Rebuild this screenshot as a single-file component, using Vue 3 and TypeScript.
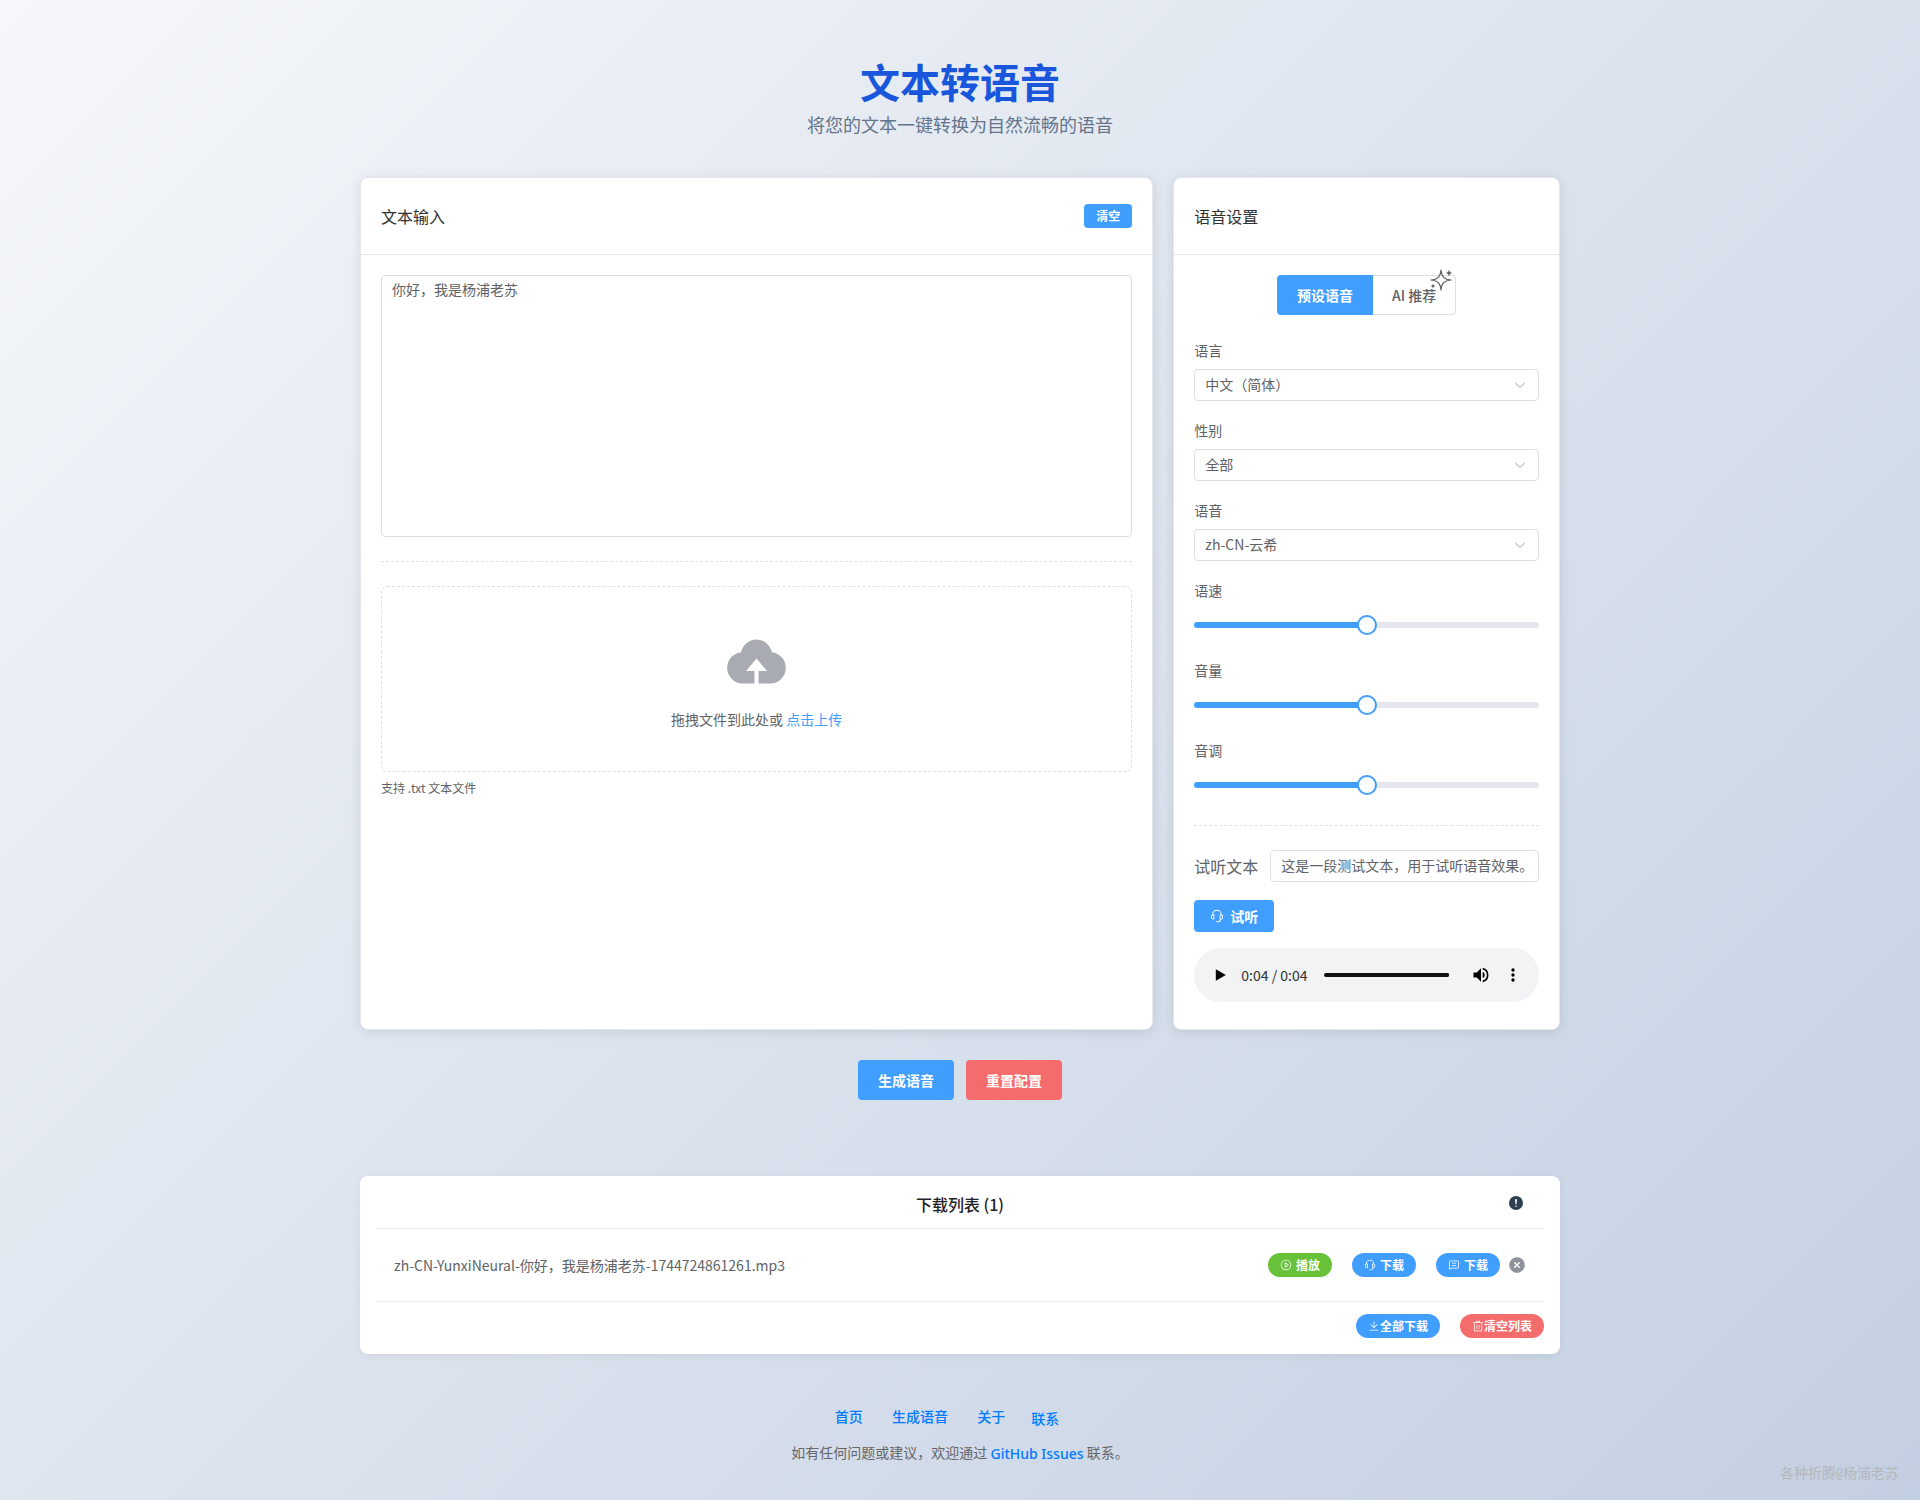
<script setup lang="ts">
import { ref } from 'vue'

type Mode = 'preset' | 'ai'
type SliderKey = 'rate' | 'volume' | 'pitch'

interface SelectField {
  id: string
  label: string
  value: string
  options: string[]
}

interface SliderField {
  id: SliderKey
  label: string
  value: number
}

const icons = {
  arrow:
    'M831.872 340.864 512 652.672 192.128 340.864a30.592 30.592 0 0 0-42.752 0 29.12 29.12 0 0 0 0 41.6L489.664 714.24a32 32 0 0 0 44.672 0l340.288-331.712a29.12 29.12 0 0 0 0-41.728 30.592 30.592 0 0 0-42.752 0z',
  upload:
    'M544 864V672h128L512 480 352 672h128v192H320v-1.6c-5.376.32-10.496 1.6-16 1.6A240 240 0 0 1 64 624c0-123.136 93.12-223.488 212.608-237.248A239.808 239.808 0 0 1 512 192a239.872 239.872 0 0 1 235.456 194.752c119.488 13.76 212.48 114.112 212.48 237.248a240 240 0 0 1-240 240c-5.376 0-10.56-1.28-16-1.6v1.6z',
  service:
    'M864 409.6a192 192 0 0 1-37.888 349.44A256.064 256.064 0 0 1 576 960h-96a32 32 0 1 1 0-64h96a192.064 192.064 0 0 0 181.12-128H736a32 32 0 0 1-32-32V416a32 32 0 0 1 32-32h32c10.368 0 20.544.832 30.528 2.432a288 288 0 0 0-573.056 0A193.235 193.235 0 0 1 256 384h32a32 32 0 0 1 32 32v320a32 32 0 0 1-32 32h-32a192 192 0 0 1-96-358.4 352 352 0 0 1 704 0M256 448a128 128 0 1 0 0 256zm640 128a128 128 0 0 0-128-128v256a128 128 0 0 0 128-128',
  play:
    'M512 64a448 448 0 1 1 0 896 448 448 0 0 1 0-896m0 832a384 384 0 0 0 0-768 384 384 0 0 0 0 768m-48-247.616L668.608 512 464 375.616zm10.624-342.656 249.472 166.336a48 48 0 0 1 0 79.872L474.624 718.272A48 48 0 0 1 400 678.336V345.6a48 48 0 0 1 74.624-39.936z',
  chat:
    'M160 826.88 273.536 736H800a64 64 0 0 0 64-64V256a64 64 0 0 0-64-64H224a64 64 0 0 0-64 64zM296 800 147.968 918.4A32 32 0 0 1 96 893.44V256a128 128 0 0 1 128-128h576a128 128 0 0 1 128 128v416a128 128 0 0 1-128 128zM352 512h320q32 0 32 32t-32 32H352q-32 0-32-32t32-32m0-192h320q32 0 32 32t-32 32H352q-32 0-32-32t32-32',
  download:
    'M160 832h704a32 32 0 1 1 0 64H160a32 32 0 1 1 0-64m384-253.696 236.288-236.352 45.248 45.248L508.8 704 192 387.2l45.248-45.248L480 584.704V128h64z',
  trash:
    'M160 256H96a32 32 0 0 1 0-64h256V95.936a32 32 0 0 1 32-32h256a32 32 0 0 1 32 32V192h256a32 32 0 1 1 0 64h-64v672a32 32 0 0 1-32 32H192a32 32 0 0 1-32-32zm448-64v-64H416v64zM224 896h576V256H224zm192-128a32 32 0 0 1-32-32V416a32 32 0 0 1 64 0v320a32 32 0 0 1-32 32m192 0a32 32 0 0 1-32-32V416a32 32 0 0 1 64 0v320a32 32 0 0 1-32 32',
  close:
    'M512 64a448 448 0 1 1 0 896 448 448 0 0 1 0-896m0 393.664L407.936 353.6a38.4 38.4 0 1 0-54.336 54.336L457.664 512 353.6 616.064a38.4 38.4 0 1 0 54.336 54.336L512 566.336 616.064 670.4a38.4 38.4 0 1 0 54.336-54.336L566.336 512 670.4 407.936a38.4 38.4 0 1 0-54.336-54.336z',
  warning:
    'M512 64a448 448 0 1 1 0 896 448 448 0 0 1 0-896m0 192a58.432 58.432 0 0 0-58.24 63.744l23.36 256.384a35.072 35.072 0 0 0 69.76 0l23.296-256.384A58.432 58.432 0 0 0 512 256m0 512a51.2 51.2 0 1 0 0-102.4 51.2 51.2 0 0 0 0 102.4',
}

const mode = ref<Mode>('preset')
const text = ref('你好，我是杨浦老苏')
const previewText = ref('这是一段测试文本，用于试听语音效果。')
const progress = ref(100)

const selects = ref<SelectField[]>([
  { id: 'language', label: '语言', value: '中文（简体）', options: ['中文（简体）'] },
  { id: 'gender', label: '性别', value: '全部', options: ['全部'] },
  { id: 'voice', label: '语音', value: 'zh-CN-云希', options: ['zh-CN-云希'] },
])

const defaults: SliderField[] = [
  { id: 'rate', label: '语速', value: 50 },
  { id: 'volume', label: '音量', value: 50 },
  { id: 'pitch', label: '音调', value: 50 },
]
const sliders = ref<SliderField[]>(defaults.map((s) => ({ ...s })))

const files = ref<string[]>(['zh-CN-YunxiNeural-你好，我是杨浦老苏-1744724861261.mp3'])

function reset() {
  sliders.value = defaults.map((s) => ({ ...s }))
}
</script>

<template>
  <div class="page">
    <main class="container">
      <header class="hero">
        <h1>文本转语音</h1>
        <p>将您的文本一键转换为自然流畅的语音</p>
      </header>

      <div class="columns">
        <section class="card">
          <div class="card-header">
            <span>文本输入</span>
            <button type="button" class="btn small primary" @click="text = ''">清空</button>
          </div>
          <div class="card-body">
            <textarea v-model="text" class="field text-area" aria-label="文本输入"></textarea>
            <hr class="divider" />
            <div class="upload">
              <svg class="cloud" viewBox="0 0 1024 1024" aria-hidden="true"><path :d="icons.upload" /></svg>
              <p>拖拽文件到此处或 <a href="#upload">点击上传</a></p>
            </div>
            <p class="tip">支持 .txt 文本文件</p>
          </div>
        </section>

        <section class="card">
          <div class="card-header"><span>语音设置</span></div>
          <div class="card-body">
            <div class="modes">
              <button type="button" class="mode" :class="{ active: mode === 'preset' }" @click="mode = 'preset'">预设语音</button>
              <button type="button" class="mode" :class="{ active: mode === 'ai' }" @click="mode = 'ai'">
                AI 推荐
                <svg class="sparkle" viewBox="0 0 24 24" aria-hidden="true">
                  <path class="line" d="M12 2C12.6 8.8 15.200 11.400 22 12C15.200 12.600 12.600 15.200 12 22C11.400 15.200 8.800 12.600 2 12C8.800 11.400 11.400 8.800 12 2z" />
                  <path class="fill" d="M20 2l1 2 2 1-2 1-1 2-1-2-2-1 2-1zM4 15.800l.8 1.400 1.400.8-1.400.8-.8 1.400-.8-1.400-1.400-.8 1.400-.8z" />
                </svg>
              </button>
            </div>

            <div v-for="item in selects" :key="item.id" class="form-item">
              <label :for="item.id">{{ item.label }}</label>
              <div class="select-wrap">
                <select :id="item.id" v-model="item.value" class="field">
                  <option v-for="option in item.options" :key="option">{{ option }}</option>
                </select>
                <svg class="chevron" viewBox="0 0 1024 1024" aria-hidden="true"><path :d="icons.arrow" /></svg>
              </div>
            </div>

            <div v-for="item in sliders" :key="item.id" class="form-item">
              <label :for="item.id">{{ item.label }}</label>
              <input
                :id="item.id"
                v-model.number="item.value"
                type="range"
                min="0"
                max="100"
                class="slider"
                :style="{ '--value': item.value + '%' }"
              />
            </div>

            <hr class="divider" />

            <div class="preview-row">
              <label for="preview">试听文本</label>
              <input id="preview" v-model="previewText" type="text" class="field" />
            </div>
            <button type="button" class="btn primary listen">
              <svg viewBox="0 0 1024 1024" aria-hidden="true"><path :d="icons.service" /></svg>
              <span>试听</span>
            </button>

            <div class="player">
              <button type="button" aria-label="播放">
                <svg viewBox="0 0 24 24"><path d="M7 5v14l12-7z" /></svg>
              </button>
              <span class="time">0:04 / 0:04</span>
              <input v-model.number="progress" type="range" min="0" max="100" class="timeline" aria-label="进度" />
              <button type="button" aria-label="音量">
                <svg viewBox="0 0 24 24"><path d="M3 9v6h4l5 5V4L7 9zm13.500 3A4.500 4.500 0 0 0 14 7.970v8.050A4.500 4.500 0 0 0 16.500 12zM14 3.230v2.060a7 7 0 0 1 0 13.420v2.060a9 9 0 0 0 0-17.540z" /></svg>
              </button>
              <button type="button" aria-label="更多">
                <svg viewBox="0 0 24 24"><path d="M12 8a2 2 0 1 0 0-4 2 2 0 0 0 0 4zm0 2a2 2 0 1 0 0 4 2 2 0 0 0 0-4zm0 6a2 2 0 1 0 0 4 2 2 0 0 0 0-4z" /></svg>
              </button>
            </div>
          </div>
        </section>
      </div>

      <div class="actions">
        <button type="button" class="btn large primary">生成语音</button>
        <button type="button" class="btn large danger" @click="reset">重置配置</button>
      </div>

      <section class="downloads">
        <header class="downloads-header">
          <h2>下载列表 ({{ files.length }})</h2>
          <svg class="notice" viewBox="0 0 1024 1024" aria-hidden="true"><path :d="icons.warning" /></svg>
        </header>
        <ul>
          <li v-for="(file, index) in files" :key="file">
            <span class="file-name">{{ file }}</span>
            <div class="file-actions">
              <button type="button" class="btn small round success spaced">
                <svg viewBox="0 0 1024 1024" aria-hidden="true"><path :d="icons.play" /></svg><span>播放</span>
              </button>
              <button type="button" class="btn small round primary spaced">
                <svg viewBox="0 0 1024 1024" aria-hidden="true"><path :d="icons.service" /></svg><span>下载</span>
              </button>
              <button type="button" class="btn small round primary spaced">
                <svg viewBox="0 0 1024 1024" aria-hidden="true"><path :d="icons.chat" /></svg><span>下载</span>
              </button>
              <button type="button" class="remove" aria-label="删除" @click="files.splice(index, 1)">
                <svg viewBox="0 0 1024 1024" aria-hidden="true"><path :d="icons.close" /></svg>
              </button>
            </div>
          </li>
        </ul>
        <div class="downloads-footer">
          <button type="button" class="btn small round primary">
            <svg viewBox="0 0 1024 1024" aria-hidden="true"><path :d="icons.download" /></svg>全部下载
          </button>
          <button type="button" class="btn small round danger" @click="files = []">
            <svg viewBox="0 0 1024 1024" aria-hidden="true"><path :d="icons.trash" /></svg>清空列表
          </button>
        </div>
      </section>
    </main>

    <footer class="footer">
      <nav>
        <a href="#home">首页</a> <a href="#generate">生成语音</a> <a href="#about">关于</a><a href="#contact" class="link">联系</a>
      </nav>
      <p>如有任何问题或建议，欢迎通过 <a href="#issues" class="link"><span class="latin">GitHub Issues</span></a> 联系。</p>
    </footer>

    <span class="watermark">各种折腾@杨浦老苏</span>
  </div>
</template>

<style>
body {
  margin: 0;
}
</style>

<style scoped>
.page,
.page * {
  box-sizing: border-box;
}

.page {
  position: relative;
  min-height: 100vh;
  padding: 48px 20px 28px;
  background: linear-gradient(135deg, #f5f7fa 0%, #c3cfe2 100%);
  color: #2c3e50;
  font-family: 'Noto Sans CJK SC', sans-serif;
  font-size: 14px;
  line-height: 22px;
}

button,
input,
select,
textarea {
  margin: 0;
  font-family: inherit;
  font-size: 14px;
}

button {
  cursor: pointer;
}

h1,
h2,
p,
ul {
  margin: 0;
  padding: 0;
  font-weight: 400;
}

a {
  text-decoration: none;
}

svg {
  display: block;
  flex: none;
  fill: currentColor;
}

.container {
  max-width: 1200px;
  margin: 0 auto;
}

.hero {
  padding-bottom: 43px;
  text-align: center;
}

.hero h1 {
  color: #1a56db;
  font-size: 40px;
  font-weight: 700;
  line-height: 66px;
}

.hero p {
  color: #64748b;
  font-size: 18px;
  line-height: 20px;
}

.columns {
  display: grid;
  grid-template-columns: calc((100% + 20px) * 2 / 3 - 20px) minmax(0, 1fr);
  gap: 20px;
}

.card {
  border: 1px solid #e4e7ed;
  border-radius: 8px;
  background: #fff;
  box-shadow: 0 2px 12px rgba(0, 0, 0, 0.1);
}

.card-header {
  display: flex;
  align-items: center;
  justify-content: space-between;
  height: 77px;
  padding: 0 20px;
  border-bottom: 1px solid #e4e7ed;
  color: #303133;
  font-size: 16px;
}

.card-body {
  padding: 20px;
  color: #606266;
}

.field {
  display: block;
  width: 100%;
  min-width: 0;
  height: 32px;
  padding: 0 10px 2px;
  border: 1px solid #dcdfe6;
  border-radius: 4px;
  outline: 0;
  background: #fff;
  color: #606266;
}

.text-area {
  height: 262px;
  padding: 3px 10px;
  line-height: 20px;
  resize: none;
}

.divider {
  height: 0;
  margin: 24px 0;
  border: 0;
  border-top: 1px dashed #e0e2e6;
}

.upload {
  display: flex;
  flex-direction: column;
  align-items: center;
  gap: 15px;
  padding: 40px 10px 42px;
  border: 1px dashed #dcdfe6;
  border-radius: 6px;
}

.upload p {
  line-height: 20px;
}

.upload a {
  color: #409eff;
}

.cloud {
  width: 67px;
  height: 67px;
  color: #a8abb2;
}

.tip {
  margin-top: 6px;
  font-size: 12px;
  line-height: 20px;
}

.btn {
  display: inline-flex;
  align-items: center;
  justify-content: center;
  height: 32px;
  padding: 0 16px 1px;
  border: 0;
  border-radius: 4px;
  color: #fff;
  font-weight: 700;
  line-height: 1;
  white-space: nowrap;
}

.btn svg {
  width: 14px;
  height: 14px;
}

.btn.small {
  height: 24px;
  padding: 0 12px;
  font-size: 12px;
}

.btn.small svg {
  width: 12px;
  height: 12px;
}

.btn.large {
  height: 40px;
  padding: 0 20px 1px;
}

.btn.round {
  border-radius: 12px;
}

.btn.spaced {
  gap: 4px;
}

.primary {
  background: #409eff;
}

.danger {
  background: #f56c6c;
}

.success {
  background: #67c23a;
}

.modes {
  display: flex;
  justify-content: center;
  margin-bottom: 24px;
}

.mode {
  position: relative;
  height: 40px;
  padding: 0 19px 1px;
  border: 1px solid #dcdfe6;
  border-left: 0;
  border-radius: 0 4px 4px 0;
  background: #fff;
  color: #606266;
  font-weight: 500;
}

.mode:first-child {
  padding: 0 20px 1px;
  border: 0;
  border-radius: 4px 0 0 4px;
}

.mode.active {
  background: #409eff;
  color: #fff;
  font-weight: 700;
}

.sparkle {
  position: absolute;
  top: -8px;
  right: 2px;
  width: 24px;
  height: 24px;
}

.sparkle .line {
  fill: none;
  stroke: currentColor;
  stroke-width: 1.2;
  stroke-linejoin: round;
}

.form-item {
  margin-bottom: 18px;
}

.form-item label {
  display: block;
  margin-bottom: 8px;
}

.select-wrap {
  position: relative;
}

.select-wrap select {
  appearance: none;
}

.chevron {
  position: absolute;
  top: 9px;
  right: 12px;
  width: 14px;
  height: 14px;
  color: #a8abb2;
  pointer-events: none;
}

.slider {
  display: block;
  width: 100%;
  height: 32px;
  appearance: none;
  background: none;
}

.slider::-webkit-slider-runnable-track {
  height: 6px;
  border-radius: 3px;
  background: linear-gradient(to right, #409eff var(--value), #e4e7ed var(--value));
}

.slider::-webkit-slider-thumb {
  width: 20px;
  height: 20px;
  margin-top: -7px;
  appearance: none;
  border: 2px solid #409eff;
  border-radius: 50%;
  background: #fff;
}

.preview-row {
  display: flex;
  align-items: center;
  gap: 12px;
  margin-bottom: 18px;
}

.preview-row label {
  flex: none;
  font-size: 16px;
}

.listen {
  display: flex;
  gap: 6px;
}

.player {
  display: flex;
  align-items: center;
  height: 54px;
  margin: 16px 0 7px;
  padding: 0 10px;
  border-radius: 27px;
  background: #f1f3f4;
}

.player button {
  display: flex;
  flex: none;
  align-items: center;
  justify-content: center;
  width: 32px;
  height: 32px;
  padding: 0;
  border: 0;
  background: none;
  color: #000;
}

.player svg {
  width: 20px;
  height: 20px;
}

.time {
  margin: 0 16px 0 5px;
  color: #303133;
  white-space: nowrap;
}

.timeline {
  flex: 1;
  min-width: 0;
  height: 4px;
  margin-right: 16px;
  appearance: none;
  border-radius: 2px;
  background: #111;
}

.timeline::-webkit-slider-thumb {
  width: 4px;
  height: 4px;
  appearance: none;
  border-radius: 50%;
  background: #111;
}

.actions {
  display: flex;
  justify-content: center;
  gap: 12px;
  padding: 30px 0 76px;
}

.downloads {
  padding: 16px;
  border-radius: 8px;
  background: #fff;
  box-shadow: 0 2px 8px rgba(0, 0, 0, 0.06);
}

.downloads-header {
  position: relative;
  height: 37px;
  border-bottom: 1px solid #ebeef0;
}

.downloads-header h2 {
  color: #1f2329;
  font-size: 16px;
  font-weight: 500;
  line-height: 24px;
  text-align: center;
}

.notice {
  position: absolute;
  top: 3px;
  right: 20px;
  width: 16px;
  height: 16px;
}

.downloads ul {
  list-style: none;
}

.downloads li {
  display: flex;
  align-items: center;
  justify-content: space-between;
  height: 73px;
  padding: 0 18px;
  border-bottom: 1px solid #ebeef0;
  color: #606266;
}

.file-actions {
  display: flex;
  align-items: center;
  gap: 20px;
}

.remove {
  width: 18px;
  height: 18px;
  margin-left: -12px;
  padding: 0;
  border: 0;
  background: none;
  color: #909399;
}

.downloads-footer {
  display: flex;
  justify-content: flex-end;
  gap: 20px;
  padding-top: 12px;
}

.footer {
  padding-top: 51px;
  color: #666;
  text-align: center;
}

.footer nav {
  margin-bottom: 12px;
}

.footer a {
  color: #007bff;
  font-weight: 500;
}

.footer nav a {
  margin-right: 26px;
}

.footer .link {
  display: inline-flex;
  vertical-align: middle;
}

.latin {
  font-family: 'Noto Sans', sans-serif;
}

.watermark {
  position: absolute;
  right: 21px;
  bottom: 17px;
  color: #b4b7bb;
  font-family: 'Noto Sans Mono CJK SC', 'Noto Sans CJK SC', monospace;
}
</style>
